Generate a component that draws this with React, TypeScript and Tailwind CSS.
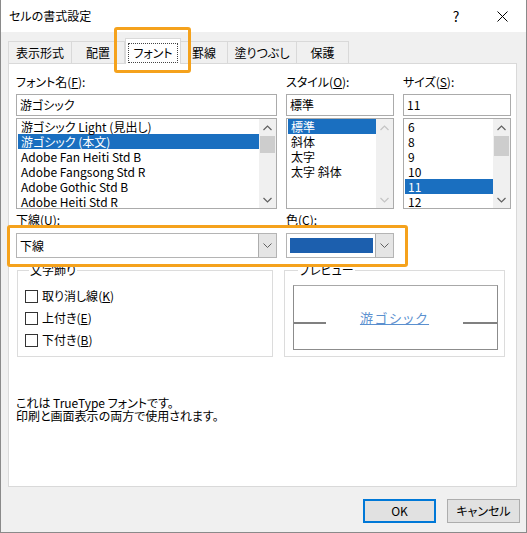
import React from "react";

const Chevron = ({ dir, disabled }: { dir: "up" | "down"; disabled?: boolean }) => (
  <svg width="9" height="6" viewBox="0 0 9 6">
    <polyline
      points={dir === "up" ? "0.5,5 4.5,1 8.5,5" : "0.5,1 4.5,5 8.5,1"}
      fill="none"
      stroke={disabled ? "#c4c4c4" : "#606060"}
      strokeWidth="1.2"
    />
  </svg>
);

const ScrollBar = ({ thumb, disabled }: { thumb?: string; disabled?: boolean }) => (
  <div className="w-[17px] h-full bg-[#f0f0f0] flex flex-col">
    <div className="h-[17px] flex items-center justify-center">
      <Chevron dir="up" disabled={disabled} />
    </div>
    <div className="flex-1 px-[1px]">
      {thumb && <div className={`${thumb} bg-[#cdcdcd]`} />}
    </div>
    <div className="h-[17px] flex items-center justify-center">
      <Chevron dir="down" disabled={disabled} />
    </div>
  </div>
);

const ListBox = ({
  items,
  selected,
  thumb,
  disabled,
}: {
  items: string[];
  selected: number;
  thumb?: string;
  disabled?: boolean;
}) => (
  <div className="mt-[2px] h-[91px] border border-[#ababab] flex bg-white">
    <div className="flex-1 pt-[0px] pl-[1px] overflow-hidden">
      {items.map((item, i) => (
        <div
          key={item}
          className={`h-[15px] leading-[15px] pl-[3px] whitespace-nowrap ${
            i === selected ? "bg-[#1a6fc0] text-white" : ""
          }`}
        >
          {item}
        </div>
      ))}
    </div>
    <ScrollBar thumb={thumb} disabled={disabled} />
  </div>
);

const Label = ({ text, k }: { text: string; k: string }) => (
  <div className="h-[21px] leading-[18px] whitespace-nowrap">
    {text}(<span className="underline">{k}</span>):
  </div>
);

const TextBox = ({ value }: { value: string }) => (
  <div className="h-[22px] border border-[#ababab] px-[3px] flex items-center bg-white">{value}</div>
);

const DropButton = () => (
  <div className="w-[18px] h-full bg-[#e5e5e5] border-l border-[#adadad] flex items-center justify-center">
    <svg width="9" height="5" viewBox="0 0 9 5">
      <polyline points="0.5,0.5 4.5,4.5 8.5,0.5" fill="none" stroke="#606060" strokeWidth="1" />
    </svg>
  </div>
);

const CheckRow = ({ text, k }: { text: string; k: string }) => (
  <div className="h-[22px] flex items-center gap-[4px]">
    <div className="w-[13px] h-[13px] border border-[#333] bg-white" />
    <span>
      {text}(<span className="underline">{k}</span>)
    </span>
  </div>
);

const tabs = [
  { name: "表示形式", w: "w-[64px]" },
  { name: "配置", w: "w-[53px]" },
  { name: "フォント", w: "w-[56px]", active: true },
  { name: "罫線", w: "w-[47px]" },
  { name: "塗りつぶし", w: "w-[69px]" },
  { name: "保護", w: "w-[52px]" },
];

export default function App() {
  return (
    <div className="relative w-[527px] h-[533px] bg-[#f0f0f0] border-l border-r border-b border-[#8a8a8a] flex flex-col text-[12px] text-black font-['Noto_Sans_CJK_JP',sans-serif] [font-feature-settings:'palt']">
      {/* title bar */}
      <div className="h-[32px] bg-white flex items-center pl-[8px] shrink-0">
        <span className="text-[12px]">セルの書式設定</span>
        <div className="ml-auto flex h-full mr-[1px]">
          <div className="w-[46px] flex items-center justify-center text-[14px]">?</div>
          <div className="w-[46px] flex items-center justify-center">
            <svg width="11" height="11" viewBox="0 0 11 11">
              <path d="M0.5 0.5 L10.5 10.5 M10.5 0.5 L0.5 10.5" stroke="#000" strokeWidth="1" />
            </svg>
          </div>
        </div>
      </div>

      {/* tabs */}
      <div className="h-[31px] flex items-end pl-[7px] shrink-0">
        {tabs.map((t) =>
          t.active ? (
            <div
              key={t.name}
              className={`${t.w} relative z-10 -mb-px h-[26px] bg-white border border-b-0 border-[#d9d9d9] flex items-center justify-center pt-[2px]`}
            >
              <span className="h-[20px] px-[4px] flex items-center border border-dotted border-[#444]">{t.name}</span>
            </div>
          ) : (
            <div
              key={t.name}
              className={`${t.w} h-[22px] border border-b-0 border-l-0 first:border-l border-[#d9d9d9] flex items-center justify-center`}
            >
              {t.name}
            </div>
          )
        )}
      </div>

      {/* panel */}
      <div className="ml-[7px] w-[509px] h-[424px] shrink-0 bg-white border border-[#d9d9d9] pt-[9px] pl-[7px]">
        <div className="flex gap-[9px]">
          <div className="w-[261px]">
            <Label text="フォント名" k="F" />
            <TextBox value="游ゴシック" />
            <ListBox
              items={[
                "游ゴシック Light (見出し)",
                "游ゴシック (本文)",
                "Adobe Fan Heiti Std B",
                "Adobe Fangsong Std R",
                "Adobe Gothic Std B",
                "Adobe Heiti Std R",
              ]}
              selected={1}
              thumb="h-[17px]"
            />
          </div>
          <div className="w-[108px]">
            <Label text="スタイル" k="O" />
            <TextBox value="標準" />
            <ListBox items={["標準", "斜体", "太字", "太字 斜体"]} selected={0} disabled />
          </div>
          <div className="w-[108px]">
            <Label text="サイズ" k="S" />
            <TextBox value="11" />
            <ListBox items={["6", "8", "9", "10", "11", "12"]} selected={4} thumb="h-[20px]" />
          </div>
        </div>

        {/* underline / colour */}
        <div className="flex gap-[9px]">
          <div className="w-[261px]">
            <div className="h-[24px] pt-[4px] leading-[14px]">
              下線(<span className="underline">U</span>):
            </div>
            <div className="h-[25px] border border-[#b4b4b4] flex">
              <div className="flex-1 pl-[3px] flex items-center">下線</div>
              <DropButton />
            </div>
          </div>
          <div className="w-[108px]">
            <div className="h-[24px] pt-[4px] leading-[14px]">
              色(<span className="underline">C</span>):
            </div>
            <div className="h-[25px] border border-[#b4b4b4] flex">
              <div className="flex-1 pl-[3px] pr-[2px] flex items-center">
                <div className="w-full h-[15px] bg-[#1c5fae]" />
              </div>
              <DropButton />
            </div>
          </div>
        </div>

        {/* groups */}
        <div className="flex mt-[5px] pl-[1px] gap-[11px]">
          <fieldset className="w-[256px] h-[94px] border border-[#dcdcdc] pl-[7px]">
            <legend className="ml-[4px] px-[1px] leading-[14px]">文字飾り</legend>
            <div className="pt-[8px]">
              <CheckRow text="取り消し線" k="K" />
              <CheckRow text="上付き" k="E" />
              <CheckRow text="下付き" k="B" />
            </div>
          </fieldset>
          <fieldset className="w-[221px] h-[94px] border border-[#dcdcdc] pl-[8px]">
            <legend className="ml-[5px] px-[1px] leading-[14px]">プレビュー</legend>
            <div className="mt-[8px] w-[205px] h-[65px] border border-[#8c8c8c] border-t-[#a8a8a8] pt-[23px]">
              <div className="h-[18px] flex items-end">
                <div className="w-[32px] h-[2px] bg-[#808080] mb-[3px]" />
                <div className="flex-1 text-center leading-[18px] text-[13px] text-[#5b90cf] underline tracking-[2px]">
                  游ゴシック
                </div>
                <div className="w-[34px] h-[2px] bg-[#808080] mb-[3px]" />
              </div>
            </div>
          </fieldset>
        </div>

        <div className="mt-[39px] leading-[13px]">
          <div>これは TrueType フォントです。</div>
          <div>印刷と画面表示の両方で使用されます。</div>
        </div>
      </div>

      {/* buttons */}
      <div className="flex justify-end gap-[11px] pt-[12px] pr-[6px]">
        <div className="w-[73px] h-[24px] bg-[#e1e1e1] border-2 border-[#0078d7] flex items-center justify-center">OK</div>
        <div className="w-[73px] h-[24px] bg-[#e1e1e1] border border-[#adadad] flex items-center justify-center">
          キャンセル
        </div>
      </div>

      {/* highlight boxes */}
      <div className="absolute left-[113px] top-[27px] w-[77px] h-[46px] border-[3px] border-[#f5a21c] rounded-[3px] z-20" />
      <div className="absolute left-[6px] top-[225px] w-[401px] h-[42px] border-[3px] border-[#f5a21c] rounded-[3px] z-20" />
    </div>
  );
}
